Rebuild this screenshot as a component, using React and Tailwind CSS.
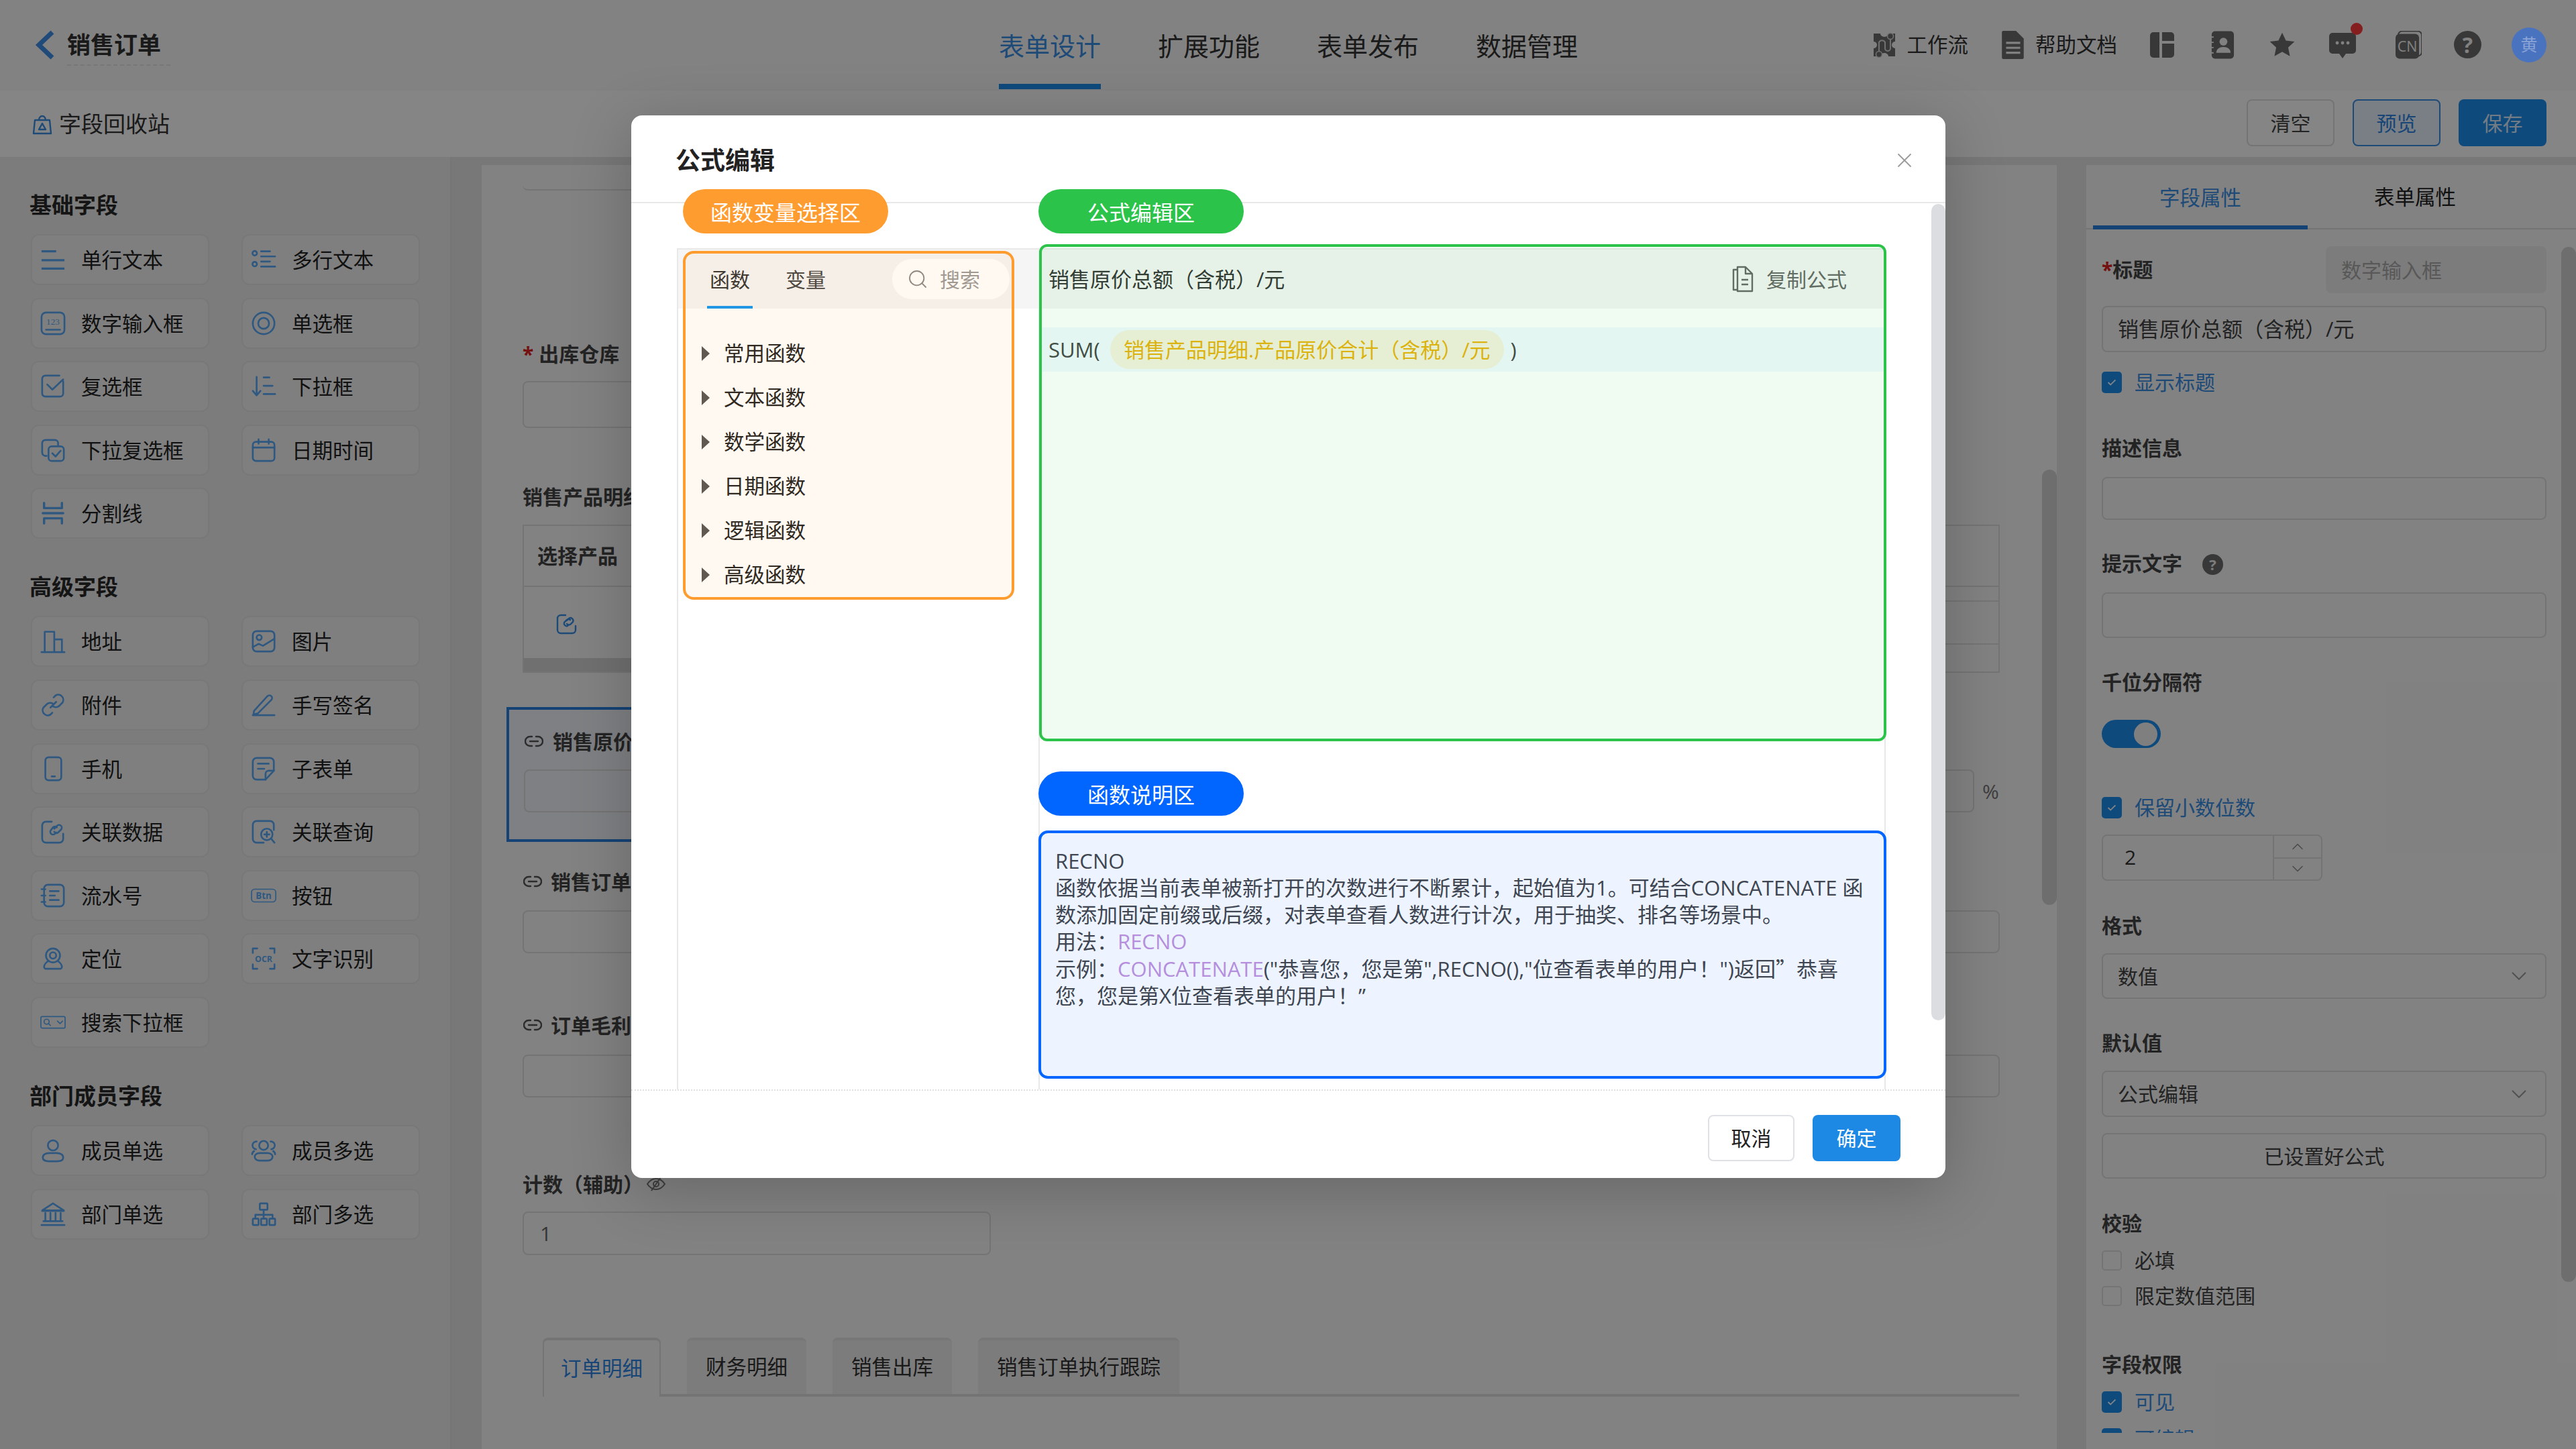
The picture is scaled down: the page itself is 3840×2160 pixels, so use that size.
import { useState } from 'react';
import { ChevronDown, ChevronUp, Search, X } from 'lucide-react';

const basicFields = [
  ['single', '单行文本'], ['multi', '多行文本'], ['number', '数字输入框'], ['radio', '单选框'],
  ['check', '复选框'], ['dropdown', '下拉框'], ['multiDrop', '下拉复选框'], ['date', '日期时间'],
  ['divider', '分割线'],
];
const advancedFields = [
  ['address', '地址'], ['image', '图片'], ['attach', '附件'], ['sign', '手写签名'],
  ['phone', '手机'], ['subform', '子表单'], ['relData', '关联数据'], ['relQuery', '关联查询'],
  ['serial', '流水号'], ['btn', '按钮'], ['locate', '定位'], ['ocr', '文字识别'],
  ['searchDrop', '搜索下拉框'],
];
const memberFields = [
  ['user', '成员单选'], ['users', '成员多选'], ['bank', '部门单选'], ['org', '部门多选'],
];
const functionGroups = ['常用函数', '文本函数', '数学函数', '日期函数', '逻辑函数', '高级函数'];

const fieldIcons = {
  single: <path d="M2 7h23M2 21h36M2 34h36" strokeWidth="3.4" strokeLinecap="butt" />,
  multi: (
    <>
      <circle cx="6" cy="10" r="3.5" /><circle cx="6" cy="27" r="3.5" />
      <path d="M16 7h14M16 15h22M16 23h14M16 31h22" />
    </>
  ),
  number: (
    <>
      <rect x="2" y="3" width="36" height="34" rx="7" />
      <path d="M9 30h22" />
      <text x="20" y="22" textAnchor="middle" fontSize="14" fontFamily="'Liberation Serif', serif" fill="currentColor" stroke="none">123</text>
    </>
  ),
  radio: <><circle cx="20" cy="20" r="17" /><circle cx="20" cy="20" r="8.5" /></>,
  check: (
    <>
      <path d="M36 12v19a5 5 0 0 1-5 5H8a5 5 0 0 1-5-5V8a5 5 0 0 1 5-5h22" />
      <path d="M11 17l8 8 17-16" />
    </>
  ),
  dropdown: <path d="M9 5v29M3 27l6 7 6-7M20 6h9M20 19h14M20 32h18" />,
  multiDrop: (
    <>
      <path d="M10 29H8a5 5 0 0 1-5-5V9a5 5 0 0 1 5-5h15a5 5 0 0 1 5 5v3" />
      <rect x="13" y="14" width="24" height="23" rx="5" />
      <path d="M19 25l5 5 8-9" />
    </>
  ),
  date: (
    <>
      <rect x="3" y="7" width="34" height="30" rx="5" />
      <path d="M3 16h34M12 3v7M28 3v7" />
    </>
  ),
  divider: <path d="M6 4v8h28V4M4 20h32M6 36v-8h28v8" strokeWidth="3.6" />,
  address: <path d="M2 37h36M7 36V5h15v31M22 17h12v19" />,
  image: (
    <>
      <rect x="3" y="4" width="34" height="32" rx="6" />
      <circle cx="13" cy="14" r="4" />
      <path d="M3 29l9-5 7 3 18-11" />
    </>
  ),
  attach: <path d="M16 24l9-9M21 8l3-3a8 8 0 0 1 11 11l-5 5a8 8 0 0 1-10 1M19 32l-3 3a8 8 0 0 1-11-11l5-5a8 8 0 0 1 10-1" />,
  sign: <path d="M3 36h34M5 29L26 6a4 4 0 0 1 6 6L11 33l-7 2z" />,
  phone: <><rect x="8" y="2" width="25" height="36" rx="5" /><path d="M18 32h5" /></>,
  subform: (
    <>
      <path d="M36 23V9a6 6 0 0 0-6-6H9a6 6 0 0 0-6 6v22a6 6 0 0 0 6 6h14z" />
      <path d="M36 23h-8a5 5 0 0 0-5 5v9M11 12h17M11 20h10" />
    </>
  ),
  relData: (
    <>
      <path d="M36 23v8a6 6 0 0 1-6 6H9a6 6 0 0 1-6-6V10a6 6 0 0 1 6-6h9" />
      <path d="M22 15l4-4a4 4 0 0 1 7 5l-5 5a4 4 0 0 1-6-1M26 13a4 4 0 0 0-6 0l-3 4a4 4 0 0 0 6 6l2-2" />
    </>
  ),
  relQuery: (
    <>
      <path d="M36 17V9a6 6 0 0 0-6-6H9a6 6 0 0 0-6 6v22a6 6 0 0 0 6 6h11" />
      <circle cx="25" cy="24" r="9" />
      <path d="M25 20v8M21 24h8M32 31l5 6" />
    </>
  ),
  serial: (
    <>
      <rect x="6" y="3" width="31" height="34" rx="6" />
      <path d="M2 10h6M2 20h6M2 30h6M15 13h14M15 20h8M15 27h14" />
    </>
  ),
  btn: (
    <>
      <rect x="1" y="10" width="38" height="20" rx="5" strokeWidth="1.8" />
      <text x="20" y="25" textAnchor="middle" fontSize="14" fontWeight="700" fill="currentColor" stroke="none">Btn</text>
    </>
  ),
  locate: (
    <>
      <circle cx="20" cy="15" r="11" />
      <circle cx="20" cy="15" r="5" />
      <path d="M12 24c-3 2-6 6-6 9a3 3 0 0 0 3 3h22a3 3 0 0 0 3-3c0-3-3-7-6-9" />
    </>
  ),
  ocr: (
    <>
      <path d="M10 4H3v7M30 4h7v7M3 29v7h7M37 29v7h-7" strokeWidth="2.8" />
      <text x="20" y="25" textAnchor="middle" fontSize="13" fontWeight="700" fill="currentColor" stroke="none">OCR</text>
    </>
  ),
  searchDrop: (
    <>
      <rect x="1" y="11" width="38" height="18" rx="2" strokeWidth="1.8" />
      <circle cx="10" cy="19" r="4" strokeWidth="1.8" />
      <path d="M13 22l3 3M27 18l4 4 4-4" strokeWidth="1.8" />
    </>
  ),
  user: (
    <>
      <circle cx="20" cy="12" r="8" />
      <path d="M14 24h12c6 0 10 3 10 7s-4 6-10 6H14c-6 0-10-2-10-6s4-7 10-7z" />
    </>
  ),
  users: (
    <>
      <circle cx="20" cy="12" r="7" />
      <path d="M14 24h12c5 0 8 3 8 6s-3 6-8 6H14c-5 0-8-3-8-6s3-6 8-6zM9 6a6 6 0 0 0-1 12M31 6a6 6 0 0 1 1 12M5 21c-2 1-3 3-3 5M35 21c2 1 3 3 3 5" />
    </>
  ),
  bank: <path d="M3 14L20 3l17 11zM3 15h34M8 18v13M16 18v13M24 18v13M32 18v13M5 31h30M2 37h36" />,
  org: (
    <>
      <rect x="14" y="3" width="12" height="10" rx="1" />
      <rect x="3" y="27" width="9" height="10" rx="1" />
      <rect x="16" y="27" width="9" height="10" rx="1" />
      <rect x="29" y="27" width="9" height="10" rx="1" />
      <path d="M20 13v14M7 27v-6h27v6" />
    </>
  ),
};

function FieldIcon({ name, className }) {
  return (
    <svg viewBox="0 0 40 40" fill="none" stroke="currentColor" strokeWidth="2.8" strokeLinecap="round" strokeLinejoin="round" className={className}>
      {fieldIcons[name]}
    </svg>
  );
}

function FieldGroup({ title, items, className }) {
  return (
    <div className={className}>
      <h3 className="h-[44px] mb-[21px] text-[33px] leading-[44px] font-bold text-[#2a2a2a]">{title}</h3>
      <div className="ml-[2px] grid grid-cols-[266px_266px] gap-x-[48px] gap-y-[18.6px]">
        {items.map(([icon, label]) => (
          <div key={label} className="h-[76px] flex items-center rounded-[12px] border-2 border-[#e6e6e6] bg-[#f4f4f4]">
            <div className="w-[73px] pl-[12px] shrink-0 text-[#5aaaf8]">
              <FieldIcon name={icon} className="w-[38px] h-[38px]" />
            </div>
            <span className="text-[30.5px] leading-[40px] text-[#222]">{label}</span>
          </div>
        ))}
      </div>
    </div>
  );
}

function LinkIcon({ className }) {
  return (
    <svg viewBox="0 0 28 18" fill="none" stroke="#555" strokeWidth="2.4" strokeLinecap="round" className={className}>
      <path d="M11 2H8a7 7 0 0 0 0 14h3M17 2h3a7 7 0 0 1 0 14h-3M8 9h12" />
    </svg>
  );
}

function Box({ className = '', children }) {
  return <div className={`rounded-[8px] border-2 border-[#dedede] ${className}`}>{children}</div>;
}

function Label({ children, className = '' }) {
  return <div className={`h-[40px] leading-[40px] text-[30px] font-bold text-[#444] ${className}`}>{children}</div>;
}

function CheckRow({ label, checked, className = '' }) {
  return (
    <div className={`flex items-center ${className}`}>
      {checked ? (
        <div className="w-[30px] h-[32px] rounded-[5px] bg-[#1e8ef0] flex items-center justify-center shrink-0">
          <svg viewBox="0 0 20 20" fill="none" stroke="#fff" strokeWidth="2" className="w-[18px] h-[18px]"><path d="M4 10l4 4 8-8" /></svg>
        </div>
      ) : (
        <div className="w-[30px] h-[30px] rounded-[5px] border-2 border-[#dedede] shrink-0" />
      )}
      <span className={`ml-[19px] text-[30px] leading-[32px] ${checked ? 'text-[#3a8ee6]' : 'text-[#444]'}`}>{label}</span>
    </div>
  );
}

function SelectBox({ value, className = '' }) {
  return (
    <Box className={`flex items-center justify-between pl-[22px] pr-[20px] ${className}`}>
      <span className="text-[30px] text-[#444]">{value}</span>
      <ChevronDown className="w-[38px] h-[38px] text-[#999]" strokeWidth={1.2} />
    </Box>
  );
}

function TopBar() {
  return (
    <header className="h-[133px] shrink-0 flex items-center bg-[#fafafa] pr-[44px]">
      <div className="w-[1489px] shrink-0 flex items-center pl-[52px]">
        <svg viewBox="0 0 30 44" fill="none" stroke="#3d8fe8" strokeWidth="7" className="w-[30px] h-[46px]"><path d="M26 3L6 22l20 19" /></svg>
        <span className="ml-[18px] text-[35px] leading-[46px] font-bold text-[#333] border-b-2 border-dashed border-[#e4e4e4] pb-[6px] pr-[14px] mt-[8px]">销售订单</span>
      </div>
      <nav className="flex gap-[85px] h-full">
        {['表单设计', '扩展功能', '表单发布', '数据管理'].map((tab, i) => (
          <div key={tab} className={`flex items-center pt-[12px] border-b-[8px] text-[38px] ${i === 0 ? 'border-[#1e8ef0] text-[#3a8ee6]' : 'border-transparent text-[#333]'}`}>
            {tab}
          </div>
        ))}
      </nav>
      <div className="ml-auto flex items-center text-[#6c6c6c]">
        <svg viewBox="0 0 36 38" className="w-[36px] h-[38px]">
          <path d="M2 2h10a6 5 0 0 0 12 0h10v12a5 5 0 0 0 0 10v12H24a6 5 0 0 0-12 0H2V24a5 5 0 0 0 0-10z" fill="currentColor" />
          <path d="M10 31V15a5 5 0 0 1 9 0v9a4 4 0 0 0 8 0V9" fill="none" stroke="#d8d8d8" strokeWidth="2" />
          <circle cx="27" cy="6" r="4.5" fill="currentColor" stroke="#d8d8d8" strokeWidth="1.6" />
          <circle cx="10" cy="33" r="4.5" fill="currentColor" stroke="#d8d8d8" strokeWidth="1.6" />
        </svg>
        <span className="ml-[16px] text-[30.5px] text-[#333]">工作流</span>
        <svg viewBox="0 0 32 40" className="ml-[50px] w-[34px] h-[42px]">
          <path d="M2 0h18l11 11v27a2 2 0 0 1-2 2H2a2 2 0 0 1-2-2V2a2 2 0 0 1 2-2z" fill="currentColor" />
          <path d="M6 17h20M6 24h20M6 31h20" stroke="#f7f7f7" strokeWidth="3" />
        </svg>
        <span className="ml-[16px] text-[30.5px] text-[#333]">帮助文档</span>
        <svg viewBox="0 0 36 38" className="ml-[49px] w-[36px] h-[38px]" fill="currentColor">
          <path d="M5 0h9v38H5a5 5 0 0 1-5-5V5a5 5 0 0 1 5-5zM18 0h13a5 5 0 0 1 5 5v8H18zM18 17h18v16a5 5 0 0 1-5 5H18z" />
        </svg>
        <svg viewBox="0 0 38 42" className="ml-[53px] w-[37px] h-[42px]">
          <rect x="3" y="0" width="34" height="42" rx="5" fill="currentColor" />
          <path d="M0 9h6M0 17h6M0 25h6M0 33h6" stroke="#f7f7f7" strokeWidth="2" />
          <circle cx="21" cy="16" r="6" fill="#f7f7f7" />
          <path d="M10 33c0-6 5-9 11-9s11 3 11 9z" fill="#f7f7f7" />
        </svg>
        <svg viewBox="0 0 24 24" fill="currentColor" className="ml-[50px] w-[42px] h-[42px]">
          <path d="M12 1.5l3.2 6.8 7.3.9-5.4 5 1.5 7.3-6.6-3.7-6.6 3.7 1.5-7.3-5.4-5 7.3-.9z" />
        </svg>
        <div className="relative ml-[49px] w-[40px] h-[42px]">
          <svg viewBox="0 0 40 42" className="w-[40px] h-[42px]">
            <path d="M5 3h30a5 5 0 0 1 5 5v21a5 5 0 0 1-5 5H25l-5 7-5-7H5a5 5 0 0 1-5-5V8a5 5 0 0 1 5-5z" fill="currentColor" />
            <circle cx="12" cy="18" r="2.4" fill="#f7f7f7" /><circle cx="20" cy="18" r="2.4" fill="#f7f7f7" /><circle cx="28" cy="18" r="2.4" fill="#f7f7f7" />
          </svg>
          <span className="absolute -top-[12px] left-[32px] w-[18px] h-[18px] rounded-full bg-[#ff3a3a]" />
        </div>
        <svg viewBox="0 0 40 42" className="ml-[59px] w-[39px] h-[42px]">
          <rect x="4" y="0" width="36" height="38" rx="6" fill="none" stroke="currentColor" strokeWidth="2" />
          <rect x="0" y="4" width="36" height="38" rx="6" fill="currentColor" />
          <text x="18" y="31" textAnchor="middle" fontSize="22" fill="#f7f7f7">CN</text>
        </svg>
        <div className="ml-[48px] w-[41px] h-[41px] rounded-full bg-[#6c6c6c] text-[#f7f7f7] flex items-center justify-center text-[32px] font-bold">?</div>
        <div className="relative z-10 ml-[45px] w-[52px] h-[52px] rounded-full bg-[#4a73bf] text-[#8aa3d6] flex items-center justify-center text-[25px]">黄</div>
      </div>
    </header>
  );
}

function ActionBar() {
  return (
    <div className="h-[101px] shrink-0 flex items-center justify-between bg-white border-t-2 border-[#f8f8f8] pl-[48px] pr-[44px]">
      <div className="flex items-center">
        <svg viewBox="0 0 30 32" fill="none" stroke="#3a8ee6" strokeWidth="2.4" strokeLinejoin="round" className="w-[30px] h-[32px]">
          <path d="M4 10h22l2 20H2zM10 10a5 6 0 0 1 10 0M15 15l-5 9h10z" />
        </svg>
        <span className="ml-[10px] text-[33px] text-[#333]">字段回收站</span>
      </div>
      <div className="flex items-center gap-[27px] -mt-[3px]">
        <div className="w-[131px] h-[70px] rounded-[8px] border-2 border-[#dedede] flex items-center justify-center text-[30px] text-[#444]">清空</div>
        <div className="w-[131px] h-[70px] rounded-[8px] border-2 border-[#3a8ee6] bg-[#e9f3fd] flex items-center justify-center text-[30px] text-[#2c85e6]">预览</div>
        <div className="w-[131px] h-[70px] rounded-[8px] bg-[#1e8ef0] flex items-center justify-center text-[30px] text-[#dcedff]">保存</div>
      </div>
    </div>
  );
}

function Canvas() {
  return (
    <section className="relative mt-[12px] w-[2348px] shrink-0 overflow-hidden bg-[#f9f9f9] pl-[61px]">
      <Box className="h-[38px] w-[698px] border-t-0 border-x-0" />

      <div className="mt-[223px] h-[40px] flex items-center">
        <span className="text-[30px] font-bold text-[#e02020] mr-[8px]">*</span>
        <span className="text-[30px] font-bold text-[#444]">出库仓库</span>
      </div>
      <Box className="mt-[21px] h-[70px] w-[698px]" />

      <Label className="mt-[83px]">销售产品明细</Label>
      <div className="mt-[21px] w-[2202px] h-[221px] border-2 border-[#dedede]">
        <div className="h-[91px] flex items-center pl-[20px] text-[30px] font-bold text-[#444] border-b-2 border-[#dedede]">选择产品</div>
        <div className="relative h-[106px] flex justify-end">
          <svg viewBox="0 0 32 32" fill="none" stroke="#3a8ee6" strokeWidth="2.4" strokeLinecap="round" className="absolute left-[48px] top-[39px] w-[32px] h-[32px]">
            <path d="M29 19v6a5 5 0 0 1-5 5H7a5 5 0 0 1-5-5V8a5 5 0 0 1 5-5h7" />
            <path d="M16 11l3-3a4 4 0 0 1 6 5l-4 4a4 4 0 0 1-5-1M21 10a4 4 0 0 0-5 0l-4 4a4 4 0 0 0 5 5l2-2" />
          </svg>
          <div className="w-[400px]">
            <div className="h-[22px] border-b-2 border-[#dedede]" />
            <div className="h-[64px] border-b-2 border-[#dedede]" />
          </div>
        </div>
        <div className="w-[1500px] h-[20px] bg-[#d6d6d6]" />
      </div>

      <div className="relative mt-[82px]">
        <div className="absolute -left-[24px] -top-[31px] w-[2135px] h-[201px] border-[4px] border-[#2a80e0] bg-[#f2f6fc]" />
        <div className="relative">
          <div className="h-[40px] flex items-center pl-[3px]">
            <LinkIcon className="w-[28px] h-[18px] mr-[14px]" />
            <span className="text-[30px] font-bold text-[#444]">销售原价总额（含税）/元</span>
          </div>
          <div className="mt-[22px] flex items-center">
            <Box className="ml-[2px] h-[64px] w-[2162px]" />
            <span className="ml-[12px] text-[30px] text-[#777]">%</span>
          </div>
        </div>
      </div>

      <div className="mt-[83px] h-[40px] flex items-center pl-[1px]">
        <LinkIcon className="w-[28px] h-[18px] mr-[13px]" />
        <span className="text-[30px] font-bold text-[#444]">销售订单金额</span>
      </div>
      <Box className="mt-[23px] h-[64px] w-[2202px]" />

      <div className="mt-[87px] h-[40px] flex items-center pl-[1px]">
        <LinkIcon className="w-[28px] h-[18px] mr-[13px]" />
        <span className="text-[30px] font-bold text-[#444]">订单毛利</span>
      </div>
      <Box className="mt-[24px] h-[64px] w-[2202px]" />

      <div className="mt-[109px] h-[40px] flex items-center">
        <span className="text-[30px] font-bold text-[#444]">计数（辅助）</span>
        <svg viewBox="0 0 30 24" fill="none" stroke="#777" strokeWidth="2" className="ml-[4px] w-[30px] h-[24px]">
          <path d="M2 12c4-6 8-8 13-8s9 2 13 8c-4 6-8 8-13 8s-9-2-13-8zM8 22L22 2" /><circle cx="15" cy="12" r="4" />
        </svg>
      </div>
      <Box className="mt-[21px] h-[65px] w-[698px] flex items-center pl-[24px]">
        <span className="text-[30px] text-[#666]">1</span>
      </Box>

      <div className="mt-[123px] ml-[30px] w-[2201px] h-[88px] flex gap-[39px] border-b-4 border-[#dedede]">
        {['订单明细', '财务明细', '销售出库', '销售订单执行跟踪'].map((tab, i) => (
          <div
            key={tab}
            className={`rounded-t-[8px] flex items-center text-[30.5px] border-t-4 ${
              i === 0 ? 'h-[88px] px-[25px] bg-[#f9f9f9] border-x-2 border-[#dedede] text-[#2c85e6]' : 'h-[84px] px-[28px] bg-[#eeeeee] border-[#e4e4e4] text-[#333]'
            }`}
          >
            {tab}
          </div>
        ))}
      </div>

      <div className="absolute left-[2326px] top-[454px] w-[22px] h-[649px] rounded-full bg-[#d4d4d4]" />
    </section>
  );
}

function PropertyPanel() {
  const [decimals] = useState(2);

  return (
    <aside className="relative w-[730px] h-[1914px] mt-[12px] shrink-0 bg-[#f9f9f9]">
      <div className="h-[96px] flex pl-[10px] border-b-2 border-[#dedede]">
        <div className="w-[320px] pt-[7px] flex items-center justify-center border-b-[6px] border-[#2a80e0] text-[30.5px] text-[#3a8ee6] -mb-[2px]">字段属性</div>
        <div className="w-[320px] pt-[2px] flex items-center justify-center text-[30.5px] text-[#222]">表单属性</div>
      </div>
      <div className="h-[1794px] overflow-hidden pl-[23px] pr-[44px]">
        <div className="mt-[25px] h-[70px] flex items-center justify-between">
          <Label><span className="text-[#e02020]">*</span>标题</Label>
          <div className="w-[329px] h-[70px] rounded-[8px] bg-[#eeeeee] flex items-center pl-[23px] text-[30px] text-[#aaa]">数字输入框</div>
        </div>
        <Box className="mt-[19px] h-[69px] flex items-center pl-[22px] text-[31px] text-[#444]">销售原价总额（含税）/元</Box>
        <CheckRow label="显示标题" checked className="mt-[29px] h-[32px]" />

        <Label className="mt-[62px]">描述信息</Label>
        <Box className="mt-[23px] h-[64px]" />

        <Label className="mt-[45px] flex items-center">
          提示文字
          <span className="ml-[30px] mt-[2px] w-[31px] h-[31px] rounded-full bg-[#6c6c6c] text-[#eee] flex items-center justify-center text-[22px]">?</span>
        </Label>
        <Box className="mt-[23px] h-[68px]" />

        <Label className="mt-[46px]">千位分隔符</Label>
        <div className="mt-[36px] w-[88px] h-[42px] rounded-full bg-[#1e8ef0] flex items-center justify-end pr-[5px]">
          <div className="w-[35px] h-[35px] rounded-full bg-[#f4f4f4]" />
        </div>

        <CheckRow label="保留小数位数" checked className="mt-[73px] h-[32px]" />
        <Box className="mt-[24px] h-[69px] w-[329px] flex">
          <div className="flex-1 flex items-center pl-[32px] pb-[2px] text-[30px] text-[#333]">{decimals}</div>
          <div className="w-[72px] border-l-2 border-[#dedede] flex flex-col">
            <div className="flex-1 flex items-center justify-center border-b-2 border-[#dedede]"><ChevronUp className="w-[28px] h-[28px] text-[#888]" strokeWidth={1.2} /></div>
            <div className="flex-1 flex items-center justify-center"><ChevronDown className="w-[28px] h-[28px] text-[#888]" strokeWidth={1.2} /></div>
          </div>
        </Box>

        <Label className="mt-[47px]">格式</Label>
        <SelectBox value="数值" className="mt-[21px] h-[68px]" />

        <Label className="mt-[46px]">默认值</Label>
        <SelectBox value="公式编辑" className="mt-[21px] h-[69px]" />
        <Box className="mt-[24px] h-[68px] flex items-center justify-center text-[30px] text-[#444]">已设置好公式</Box>

        <Label className="mt-[47px]">校验</Label>
        <CheckRow label="必填" className="mt-[20px] h-[30px]" />
        <CheckRow label="限定数值范围" className="mt-[23px] h-[30px]" />

        <Label className="mt-[67px]">字段权限</Label>
        <CheckRow label="可见" checked className="mt-[20px] h-[32px]" />
        <CheckRow label="可编辑" checked className="mt-[23px] h-[32px]" />
      </div>
      <div className="absolute right-0 top-[122px] w-[22px] h-[1543px] rounded-full bg-[#d4d4d4]" />
    </aside>
  );
}

function FormulaModal() {
  return (
    <div className="absolute left-[941px] top-[172px] w-[1959px] h-[1584px] rounded-[16px] bg-white overflow-hidden flex flex-col shadow-[0_16px_90px_rgba(0,0,0,0.22)]">
      <div className="h-[131px] shrink-0 flex items-center justify-between pl-[66px] pr-[43px] pt-[4px] border-b-2 border-[#e8e8e8]">
        <h2 className="text-[37px] leading-[50px] font-bold text-[#222]">公式编辑</h2>
        <X className="w-[36px] h-[36px] text-[#999]" strokeWidth={1.2} />
      </div>

      <div className="h-[1321px] shrink-0 overflow-hidden pl-[68px] pt-[67px]">
        <div className="w-[1802px] h-[1254px] flex border-x-2 border-t-2 border-[#e8e8e8]">
          <div className="w-[537px] shrink-0">
            <div className="h-[88px] flex items-stretch bg-[#f5f5f5] pl-[43px]">
              <div className="w-[68px] pt-[4px] flex items-center justify-center border-b-4 border-[#1296f0] text-[30px] text-[#333]">函数</div>
              <div className="ml-[49px] w-[60px] pt-[4px] flex items-center justify-center border-b-4 border-transparent text-[30px] text-[#444]">变量</div>
              <div className="ml-auto mr-[43px] my-[14px] w-[175px] rounded-full bg-white flex items-center pl-[22px]">
                <Search className="w-[32px] h-[32px] text-[#888]" strokeWidth={1.4} />
                <span className="ml-[17px] text-[30px] text-[#999]">搜索</span>
              </div>
            </div>
            <ul className="pt-[34px]">
              {functionGroups.map((group) => (
                <li key={group} className="h-[66px] flex items-center pl-[35px] text-[30.5px] text-[#222]">
                  <svg viewBox="0 0 12 22" fill="#555" className="w-[12px] h-[22px] mr-[21px]"><path d="M0 0l12 11L0 22z" /></svg>
                  {group}
                </li>
              ))}
            </ul>
          </div>

          <div className="flex-1 border-l-2 border-[#e8e8e8]">
            <div className="h-[88px] flex items-center justify-between bg-[#f5f5f5] pl-[13px] pr-[56px]">
              <span className="text-[31px] text-[#333]">销售原价总额（含税）/元</span>
              <div className="flex items-center text-[#666]">
                <svg viewBox="0 0 32 40" fill="none" stroke="currentColor" strokeWidth="2.4" strokeLinejoin="round" className="w-[32px] h-[40px]">
                  <path d="M7 6H2v30h6M8 2h12l10 10v26H8zM20 2v10h10M14 21h10M14 28h10" />
                </svg>
                <span className="ml-[19px] text-[30px]">复制公式</span>
              </div>
            </div>
            <div className="mt-[28px] h-[66px] flex items-center bg-[#f2faff] pl-[13px] text-[31px] text-[#444]">
              <span className="w-[92px]">SUM(</span>
              <span className="h-[58px] rounded-full bg-[#f5f3df] pl-[20px] pr-[20px] flex items-center text-[#e9b10a]">销售产品明细.产品原价合计（含税）/元</span>
              <span className="ml-[10px]">)</span>
            </div>
            <div className="mt-[709px] pl-[23px] text-[31px] leading-[40px] text-[#444] whitespace-nowrap">
              <div>RECNO</div>
              <div>函数依据当前表单被新打开的次数进行不断累计，起始值为1。可结合CONCATENATE 函</div>
              <div>数添加固定前缀或后缀，对表单查看人数进行计次，用于抽奖、排名等场景中。</div>
              <div>用法：<span className="text-[#c392dc]">RECNO</span></div>
              <div>
                示例：<span className="text-[#c392dc]">CONCATENATE</span>("恭喜您，您是第",RECNO(),"位查看表单的用户！")返回
                <span className="font-['Noto_Sans_CJK_SC',sans-serif]">”</span>恭喜
              </div>
              <div>您，您是第X位查看表单的用户！”</div>
            </div>
          </div>
        </div>
      </div>

      <div className="flex-1 flex justify-end gap-[27px] pt-[36px] pr-[67px] border-t-2 border-dotted border-[#e0e0e0]">
        <div className="w-[129px] h-[69px] rounded-[8px] border-2 border-[#dfe1e6] flex items-center justify-center text-[30px] text-[#222]">取消</div>
        <div className="w-[131px] h-[69px] rounded-[8px] bg-[#1e88e5] flex items-center justify-center text-[30px] text-white">确定</div>
      </div>

      {/* annotation overlays */}
      <div className="absolute right-0 top-[132px] w-[21px] h-[1217px] rounded-full bg-[#dcdde0]" />
      <div className="absolute left-[77px] top-[202px] w-[494px] h-[520px] rounded-[16px] border-[4px] border-[#ff9c2f] bg-[#ff9c2f]/[0.0625]" />
      <div className="absolute left-[608px] top-[192px] w-[1263px] h-[741px] rounded-[12px] border-[4px] border-[#2cc34a] bg-[#2cc34a]/[0.07]" />
      <div className="absolute left-[607px] top-[1066px] w-[1264px] h-[370px] rounded-[14px] border-[4px] border-[#0066ff] bg-[#0066ff]/[0.07]" />
      <div className="absolute left-[77px] top-[110px] w-[306px] h-[66px] rounded-full bg-[#ff9c2f] pt-[3px] flex items-center justify-center text-[32px] text-white">函数变量选择区</div>
      <div className="absolute left-[607px] top-[110px] w-[306px] h-[66px] rounded-full bg-[#2cc34a] pt-[3px] flex items-center justify-center text-[32px] text-white">公式编辑区</div>
      <div className="absolute left-[607px] top-[978px] w-[306px] h-[66px] rounded-full bg-[#0066ff] pt-[3px] flex items-center justify-center text-[32px] text-white">函数说明区</div>
    </div>
  );
}

export default function App() {
  return (
    <div className="relative w-[3840px] h-[2160px] overflow-hidden flex flex-col bg-[#e7e7e7] font-['Open_Sans','Noto_Sans_CJK_SC',sans-serif]">
      <TopBar />
      <ActionBar />
      <main className="flex-1 flex min-h-0">
        <aside className="w-[673px] shrink-0 bg-[#ededed] border-r-2 border-[#e2e2e2] pt-[50px] pl-[44px]">
          <FieldGroup title="基础字段" items={basicFields} />
          <FieldGroup title="高级字段" items={advancedFields} className="mt-[50px]" />
          <FieldGroup title="部门成员字段" items={memberFields} className="mt-[50px]" />
        </aside>
        <div className="w-[45px] shrink-0" />
        <Canvas />
        <div className="w-[44px] shrink-0" />
        <PropertyPanel />
      </main>

      <div className="absolute inset-0 bg-black/[0.48]" />
      <FormulaModal />
    </div>
  );
}
